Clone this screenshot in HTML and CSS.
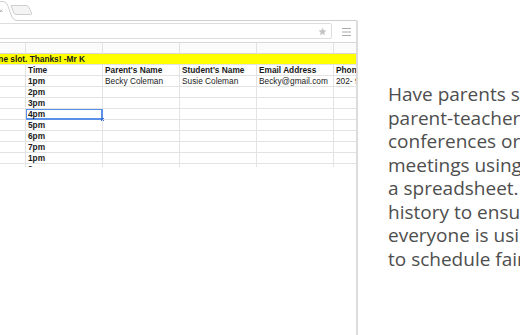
FILE: index.html
```html
<!DOCTYPE html>
<html>
<head>
<meta charset="utf-8">
<link rel="stylesheet" href="styles.css">
</head>
<body>
<div class="stage">
  <div class="window">
    <div class="tabstrip">
      <svg class="tabs" width="34" height="21" viewBox="0 0 34 21">
        <path d="M0 9.5 L2.5 12 M2.5 9.5 L0 12" stroke="#b5b5b5" stroke-width="1" fill="none"/>
        <path d="M11 5.5 H26 Q28 5.5 29 7.5 L31.5 13 Q32 14.5 30.5 14.5 H16 Q14.5 14.5 13.8 13 Z" fill="#f4f4f4" stroke="#cfcfcf" stroke-width="1"/>
        <path d="M0 1.5 H3 Q6 1.5 7.5 5 L12 17 Q13.5 20.5 17 20.5 H34" fill="none" stroke="#cfcfcf" stroke-width="1"/>
      </svg>
      <div class="tabfill"></div>
    </div>
    <div class="frame">
      <div class="toolbar">
        <div class="omnibox">
          <svg class="star" width="9" height="9" viewBox="0 0 24 24"><path d="M12 2l3 6.9 7.5.7-5.7 5 1.7 7.4L12 18.1 5.5 22l1.7-7.4-5.7-5 7.5-.7z" fill="#c4c4c4"/></svg>
        </div>
        <svg class="menu" width="9" height="8" viewBox="0 0 9 8"><path d="M0 0.5H9M0 4H9M0 7.5H9" stroke="#aaaaaa" stroke-width="1"/></svg>
      </div>
      <div class="sheet">
        <div class="grid">
          <div class="c head"></div><div class="c head"></div><div class="c head"></div><div class="c head"></div><div class="c head"></div><div class="c head last"></div>
          <div class="note"><div class="note-in"><span>Please sign up for one slot. Thanks! -Mr K</span></div></div>
          <div class="c"></div><div class="c b">Time</div><div class="c b">Parent's Name</div><div class="c b">Student's Name</div><div class="c b">Email Address</div><div class="c b last">Phone</div>
          <div class="c"></div><div class="c b">1pm</div><div class="c">Becky Coleman</div><div class="c">Susie Coleman</div><div class="c">Becky@gmail.com</div><div class="c last">202- 9</div>
          <div class="c"></div><div class="c b">2pm</div><div class="c"></div><div class="c"></div><div class="c"></div><div class="c last"></div>
          <div class="c"></div><div class="c b">3pm</div><div class="c"></div><div class="c"></div><div class="c"></div><div class="c last"></div>
          <div class="c"></div><div class="c b sel">4pm<span class="handle"></span></div><div class="c"></div><div class="c"></div><div class="c"></div><div class="c last"></div>
          <div class="c"></div><div class="c b">5pm</div><div class="c"></div><div class="c"></div><div class="c"></div><div class="c last"></div>
          <div class="c"></div><div class="c b">6pm</div><div class="c"></div><div class="c"></div><div class="c"></div><div class="c last"></div>
          <div class="c"></div><div class="c b">7pm</div><div class="c"></div><div class="c"></div><div class="c"></div><div class="c last"></div>
          <div class="c"></div><div class="c b">1pm</div><div class="c"></div><div class="c"></div><div class="c"></div><div class="c last"></div>
          <div class="c"></div><div class="c b">2pm</div><div class="c"></div><div class="c"></div><div class="c"></div><div class="c last"></div>
        </div>
      </div>
    </div>
  </div>
  <div class="copy">
    <p class="line">Have parents sign up for</p>
    <p class="line">parent-teacher</p>
    <p class="line">conferences or</p>
    <p class="line">meetings using</p>
    <p class="line">a spreadsheet. Use revision</p>
    <p class="line">history to ensure</p>
    <p class="line">everyone is using it</p>
    <p class="line">to schedule fairly.</p>
  </div>
</div>
</body>
</html>
```
FILE: styles.css
```css
html, body {
  margin: 0;
  padding: 0;
  background: #ffffff;
  overflow: hidden;
}
.stage {
  width: 520px;
  height: 335px;
  display: flex;
  overflow: hidden;
}
.window {
  width: 358px;
  flex: none;
  display: flex;
  flex-direction: column;
}
.tabstrip {
  height: 21px;
  display: flex;
  flex: none;
}
.tabs {
  display: block;
  flex: none;
}
.tabfill {
  flex: 1;
  height: 20px;
  border-bottom: 1px solid #cfcfcf;
  border-right: 2px solid transparent;
}
.frame {
  flex: 1;
  display: flex;
  flex-direction: column;
  border-right: 2px solid #dcdcdc;
}
.toolbar {
  height: 19px;
  display: flex;
  align-items: flex-start;
  border-bottom: 1px solid #d8d8d8;
  padding-top: 2px;
}
.omnibox {
  flex: 1;
  margin-left: -6px;
  height: 14px;
  border: 1px solid #dedede;
  border-radius: 2px;
  display: flex;
  align-items: center;
  justify-content: flex-end;
  padding-right: 4px;
}
.star {
  display: block;
}
.menu {
  display: block;
  margin: 5px 5px 0 10px;
}
.sheet {
  height: 124px;
  overflow: hidden;
}
.grid {
  display: grid;
  grid-template-columns: 26px 77px 77px 77px 77px 1fr;
  grid-auto-rows: 11px;
  font-family: "Liberation Sans", Arial, sans-serif;
  font-size: 8.3px;
  color: #1a1a1a;
}
.c {
  box-sizing: border-box;
  border-right: 1px solid #e3e3e3;
  border-bottom: 1px solid #e3e3e3;
  padding: 0 0 0 2px;
  line-height: 11px;
  white-space: nowrap;
  overflow: hidden;
  position: relative;
}
.c.last {
  border-right: none;
}
.head {
  background: #fbfbfb;
  border-bottom-color: #d6d6d6;
}
.b {
  font-weight: bold;
}
.note {
  grid-column: 1 / -1;
  background: #ffff00;
  box-sizing: border-box;
  border-bottom: 1px solid #e3e3e3;
  font-weight: bold;
  line-height: 11px;
  white-space: nowrap;
  overflow: hidden;
}
.note-in {
  width: 85px;
  display: flex;
  justify-content: flex-end;
}
.note-in span {
  flex: none;
}
.sel {
  overflow: visible;
  box-shadow: inset 0 0 0 1px #5b8fe8;
  border-right-color: #5b8fe8;
  border-bottom-color: #5b8fe8;
}
.handle {
  position: absolute;
  right: -2px;
  bottom: -2px;
  width: 3px;
  height: 3px;
  background: #3b6fd8;
}
.copy {
  flex: 1;
  padding: 83px 0 0 30px;
  font-family: "Open Sans", Lato, sans-serif;
  font-size: 19px;
  line-height: 23.5px;
  color: #4e4e4e;
  white-space: nowrap;
  overflow: hidden;
}
.line {
  margin: 0;
}
```
